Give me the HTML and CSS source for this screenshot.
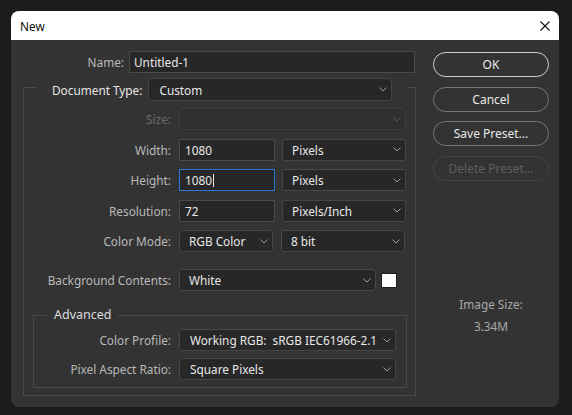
FILE: index.html
```html
<!DOCTYPE html>
<html lang="en">
<head>
    <meta charset="UTF-8">
    <title>New</title>
    <link rel="stylesheet" href="styles.css">
</head>
<body>
    <div class="dialog">
        <div class="titlebar">
            <span>New</span>
            <svg class="close" width="10" height="10" viewBox="0 0 10 10"><path d="M0.5 0.5L9.5 9.5M9.5 0.5L0.5 9.5" stroke="#111" stroke-width="1.1"/></svg>
        </div>
        <div class="content">
            <div class="form">
                <div class="name-row">
                    <label class="lbl name-lbl">Name:</label>
                    <div class="input name-input">Untitled-1</div>
                </div>

                <fieldset class="group">
                    <legend class="doc-type">
                        <span class="doc-lbl">Document Type:</span>
                        <div class="select doc-select"><span>Custom</span><svg class="chev" width="8" height="5" viewBox="0 0 8 5"><path d="M0.5 0.5L4 4L7.5 0.5" fill="none" stroke="currentColor"/></svg></div>
                    </legend>

                    <div class="row">
                        <label class="lbl off">Size:</label>
                        <div class="select wide disabled"><span></span><svg class="chev" width="8" height="5" viewBox="0 0 8 5"><path d="M0.5 0.5L4 4L7.5 0.5" fill="none" stroke="currentColor"/></svg></div>
                    </div>
                    <div class="row">
                        <label class="lbl">Width:</label>
                        <div class="input num">1080</div>
                        <div class="select unit"><span>Pixels</span><svg class="chev" width="8" height="5" viewBox="0 0 8 5"><path d="M0.5 0.5L4 4L7.5 0.5" fill="none" stroke="currentColor"/></svg></div>
                    </div>
                    <div class="row">
                        <label class="lbl">Height:</label>
                        <div class="input num focus">1080<span class="caret"></span></div>
                        <div class="select unit"><span>Pixels</span><svg class="chev" width="8" height="5" viewBox="0 0 8 5"><path d="M0.5 0.5L4 4L7.5 0.5" fill="none" stroke="currentColor"/></svg></div>
                    </div>
                    <div class="row">
                        <label class="lbl">Resolution:</label>
                        <div class="input num">72</div>
                        <div class="select unit"><span>Pixels/Inch</span><svg class="chev" width="8" height="5" viewBox="0 0 8 5"><path d="M0.5 0.5L4 4L7.5 0.5" fill="none" stroke="currentColor"/></svg></div>
                    </div>
                    <div class="row">
                        <label class="lbl">Color Mode:</label>
                        <div class="select mode"><span>RGB Color</span><svg class="chev" width="8" height="5" viewBox="0 0 8 5"><path d="M0.5 0.5L4 4L7.5 0.5" fill="none" stroke="currentColor"/></svg></div>
                        <div class="select unit"><span>8 bit</span><svg class="chev" width="8" height="5" viewBox="0 0 8 5"><path d="M0.5 0.5L4 4L7.5 0.5" fill="none" stroke="currentColor"/></svg></div>
                    </div>
                    <div class="row bg-row">
                        <label class="lbl">Background Contents:</label>
                        <div class="select bg-select"><span>White</span><svg class="chev" width="8" height="5" viewBox="0 0 8 5"><path d="M0.5 0.5L4 4L7.5 0.5" fill="none" stroke="currentColor"/></svg></div>
                        <div class="swatch"></div>
                    </div>

                    <fieldset class="advanced">
                        <legend>Advanced</legend>
                        <div class="row">
                            <label class="lbl adv-lbl">Color Profile:</label>
                            <div class="select adv-select"><span class="pre">Working RGB:  sRGB IEC61966-2.1</span><svg class="chev" width="8" height="5" viewBox="0 0 8 5"><path d="M0.5 0.5L4 4L7.5 0.5" fill="none" stroke="currentColor"/></svg></div>
                        </div>
                        <div class="row last">
                            <label class="lbl adv-lbl">Pixel Aspect Ratio:</label>
                            <div class="select adv-select"><span>Square Pixels</span><svg class="chev" width="8" height="5" viewBox="0 0 8 5"><path d="M0.5 0.5L4 4L7.5 0.5" fill="none" stroke="currentColor"/></svg></div>
                        </div>
                    </fieldset>
                </fieldset>
            </div>

            <div class="side">
                <button class="btn primary">OK</button>
                <button class="btn">Cancel</button>
                <button class="btn">Save Preset...</button>
                <button class="btn" disabled>Delete Preset...</button>
                <div class="image-size">
                    <p>Image Size:</p>
                    <p class="size-val">3.34M</p>
                </div>
            </div>
        </div>
    </div>
</body>
</html>
```

FILE: styles.css
```css
body {
    margin: 0;
    padding: 11px;
    background-color: #1b1b1b;
    font-family: "Noto Sans", "Open Sans", sans-serif;
    font-size: 11.8px;
    color: #e6e6e6;
}

.dialog {
    width: 548px;
    height: 396px;
    background-color: #333333;
    border-radius: 8px;
    overflow: hidden;
}

.titlebar {
    height: 29px;
    background-color: #ffffff;
    color: #111;
    display: flex;
    align-items: center;
    justify-content: space-between;
    padding: 0 9px;
}

.content {
    display: flex;
    gap: 18px;
    padding: 11px 10px 0 12px;
}

.form {
    width: 392px;
}

/* labels */
.lbl {
    flex: none;
    width: 147px;
    text-align: right;
    color: #b9b9b9;
    white-space: nowrap;
}

.lbl.off {
    color: #6a6a6a;
}

/* fields */
.input,
.select {
    box-sizing: border-box;
    height: 22px;
    display: flex;
    align-items: center;
    background-color: #272727;
    color: #e8e8e8;
    white-space: nowrap;
}

.input {
    border: 1px solid #4a4a4a;
    padding-left: 4px;
}

.select {
    border: 1px solid #464646;
    border-radius: 3px;
    padding: 0 4px 0 9px;
    justify-content: space-between;
}

.chev {
    color: #9c9c9c;
    flex: none;
}

.pre {
    white-space: pre;
}

.name-row {
    display: flex;
    align-items: center;
    gap: 5px;
}

.name-lbl {
    width: 101px;
}

.name-input {
    flex: 1;
}

.group {
    margin: 0;
    padding: 7px 8px 7px 0;
    border: 1px solid #4a4a4a;
}

.doc-type {
    display: flex;
    align-items: center;
    gap: 6px;
    margin-left: 12px;
    padding: 5px 15px 0 16px;
}

.doc-lbl {
    color: #e6e6e6;
    white-space: nowrap;
    flex: none;
}

.doc-select {
    width: 244px;
    height: 23px;
    padding-left: 10px;
    flex: none;
}

.row {
    display: flex;
    align-items: center;
    gap: 8px;
    height: 22px;
    margin-bottom: 8.6px;
}

.wide {
    width: 227px;
}

.disabled {
    background-color: #2f2f2f;
    border-color: #3d3d3d;
}

.disabled .chev {
    color: #565656;
}

.num {
    width: 96px;
    padding-left: 5px;
}

.focus {
    border-color: #2a78d6;
}

.caret {
    display: inline-block;
    width: 1px;
    height: 13px;
    background-color: #e8e8e8;
    margin-left: 1px;
}

.unit {
    width: 124px;
    margin-left: -1px;
}

.mode {
    width: 94px;
    margin-right: 1px;
}

.bg-row {
    margin-top: 17px;
    margin-bottom: 16px;
}

.bg-select {
    width: 197px;
    margin-right: -3px;
}

.swatch {
    width: 16px;
    height: 15px;
    box-sizing: border-box;
    background-color: #ffffff;
    border: 1px solid #1e1e1e;
}

.advanced {
    margin: 0 0 0 9px;
    padding: 6px 10px 7px 0;
    border: 1px solid #4a4a4a;
}

.advanced legend {
    margin-left: 13px;
    padding: 0 6px 0 7px;
    line-height: 16px;
    font-size: 12.5px;
    color: #dcdcdc;
}

.advanced .row {
    margin-bottom: 7px;
}

.adv-lbl {
    width: 137px;
}

.adv-select {
    width: 217px;
    padding-left: 10px;
}

.advanced .row.last {
    margin-bottom: 0;
}

/* buttons */
.side {
    width: 116px;
    padding-top: 1px;
}

.btn {
    display: block;
    width: 116px;
    height: 25px;
    margin-bottom: 9.5px;
    border: 1.5px solid #777777;
    border-radius: 13px;
    background: transparent;
    color: #e8e8e8;
    font-family: inherit;
    font-size: 12px;
}

.btn.primary {
    border-color: #cfcfcf;
}

.btn:disabled {
    border-color: #444444;
    color: #5f5f5f;
}

.image-size {
    margin-top: 115px;
    text-align: center;
    color: #a9a9a9;
}

.image-size p {
    margin: 0;
}

.size-val {
    margin-top: 6px !important;
}
```
